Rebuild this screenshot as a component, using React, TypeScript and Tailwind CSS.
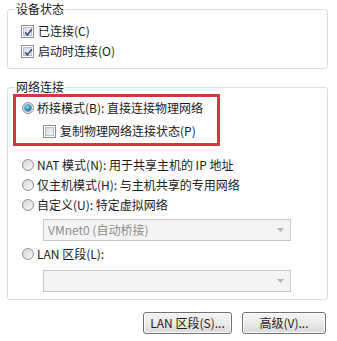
import React from 'react'

function Check({ checked }: { checked?: boolean }) {
  return (
    <span className="relative flex h-[13px] w-[13px] shrink-0 items-center justify-center border border-[#8e8f8f] bg-white">
      <span className="h-[9px] w-[9px] border border-[#b9bec6] bg-gradient-to-br from-[#d6dae0] to-[#f6f7f8]" />
      {checked && (
        <svg width="11" height="11" viewBox="0 0 11 11" className="absolute left-px top-px">
          <path d="M2.2 5.4 L4.4 8 L8.8 2.2" fill="none" stroke="#3c4f8a" strokeWidth="1.7" />
        </svg>
      )}
    </span>
  )
}

function Radio({ checked }: { checked?: boolean }) {
  return (
    <span className="flex h-[12px] w-[12px] shrink-0 items-center justify-center rounded-full border border-[#8e8f8f] bg-gradient-to-br from-[#d3d6da] to-[#f8f8f8]">
      {checked && (
        <span className="h-[6px] w-[6px] rounded-full bg-[radial-gradient(circle_at_40%_35%,#a8e4fb,#2a7fae_55%,#0e3f66)] shadow-[0_0_0_1px_#6aa8c8]" />
      )}
    </span>
  )
}

function Select({ value }: { value?: string }) {
  return (
    <div className="ml-[35px] mr-[36px] flex h-[22px] items-center justify-between border border-[#c5c9cd] bg-[#f4f4f4] pl-[4px] pr-[6px] text-[#8d8d8d]">
      <span className="leading-4">{value}</span>
      <svg width="7" height="4" viewBox="0 0 7 4"><path d="M0 0h7L3.5 4z" fill="#b5b5b5" /></svg>
    </div>
  )
}

function Row({ children, className = '' }: { children: React.ReactNode; className?: string }) {
  return <div className={`flex h-5 items-center ${className}`}>{children}</div>
}

export default function App() {
  return (
    <div
      className="h-[341px] w-[337px] overflow-hidden bg-white pt-px text-[12px] text-[#1a1a1a]"
      style={{ fontFamily: '"Noto Sans CJK SC", "Microsoft YaHei", sans-serif' }}
    >
      <fieldset className="ml-[7px] w-[321px] rounded-[3px] border border-[#d5dfe5] pt-[4px] pb-[7px]">
        <legend className="ml-[7px] px-[1px] leading-4">设备状态</legend>
        <Row className="gap-[4px] pl-[13px]"><Check checked /><span>已连接(C)</span></Row>
        <Row className="gap-[4px] pl-[13px]"><Check checked /><span>启动时连接(O)</span></Row>
      </fieldset>

      <fieldset className="ml-[7px] mt-[10px] w-[321px] rounded-[3px] border border-[#d5dfe5] pb-[7px]">
        <legend className="ml-[7px] px-[1px] leading-4">网络连接</legend>
        <div className="ml-[5px] w-[207px] border-[3px] border-[#d3393c] pt-px pb-[2px] -mt-px">
          <Row className="gap-[3px] pl-[6px]"><Radio checked /><span>桥接模式(B): 直接连接物理网络</span></Row>
          <Row className="mt-[3px] gap-[4px] pl-[27px]"><Check /><span>复制物理网络连接状态(P)</span></Row>
        </div>
        <Row className="mt-[9px] gap-[3px] pl-[14px]"><Radio /><span>NAT 模式(N): 用于共享主机的 IP 地址</span></Row>
        <Row className="gap-[3px] pl-[14px]"><Radio /><span>仅主机模式(H): 与主机共享的专用网络</span></Row>
        <Row className="gap-[3px] pl-[14px]"><Radio /><span>自定义(U): 特定虚拟网络</span></Row>
        <div className="mt-[4px]"><Select value="VMnet0 (自动桥接)" /></div>
        <Row className="mt-[3px] gap-[3px] pl-[14px]"><Radio /><span>LAN 区段(L):</span></Row>
        <div className="mt-[6px]"><Select /></div>
      </fieldset>

      <div className="mr-[11px] mt-[12px] flex justify-end gap-[10px]">
        <button className="h-[22px] w-[89px] rounded-[3px] border border-[#707070] bg-gradient-to-b from-[#f2f2f2] via-[#ebebeb] to-[#d8d8d8] leading-4 shadow-[inset_0_0_0_1px_#fcfcfc]">
          LAN 区段(S)...
        </button>
        <button className="h-[22px] w-[84px] rounded-[3px] border border-[#707070] bg-gradient-to-b from-[#f2f2f2] via-[#ebebeb] to-[#d8d8d8] leading-4 shadow-[inset_0_0_0_1px_#fcfcfc]">
          高级(V)...
        </button>
      </div>
    </div>
  )
}
